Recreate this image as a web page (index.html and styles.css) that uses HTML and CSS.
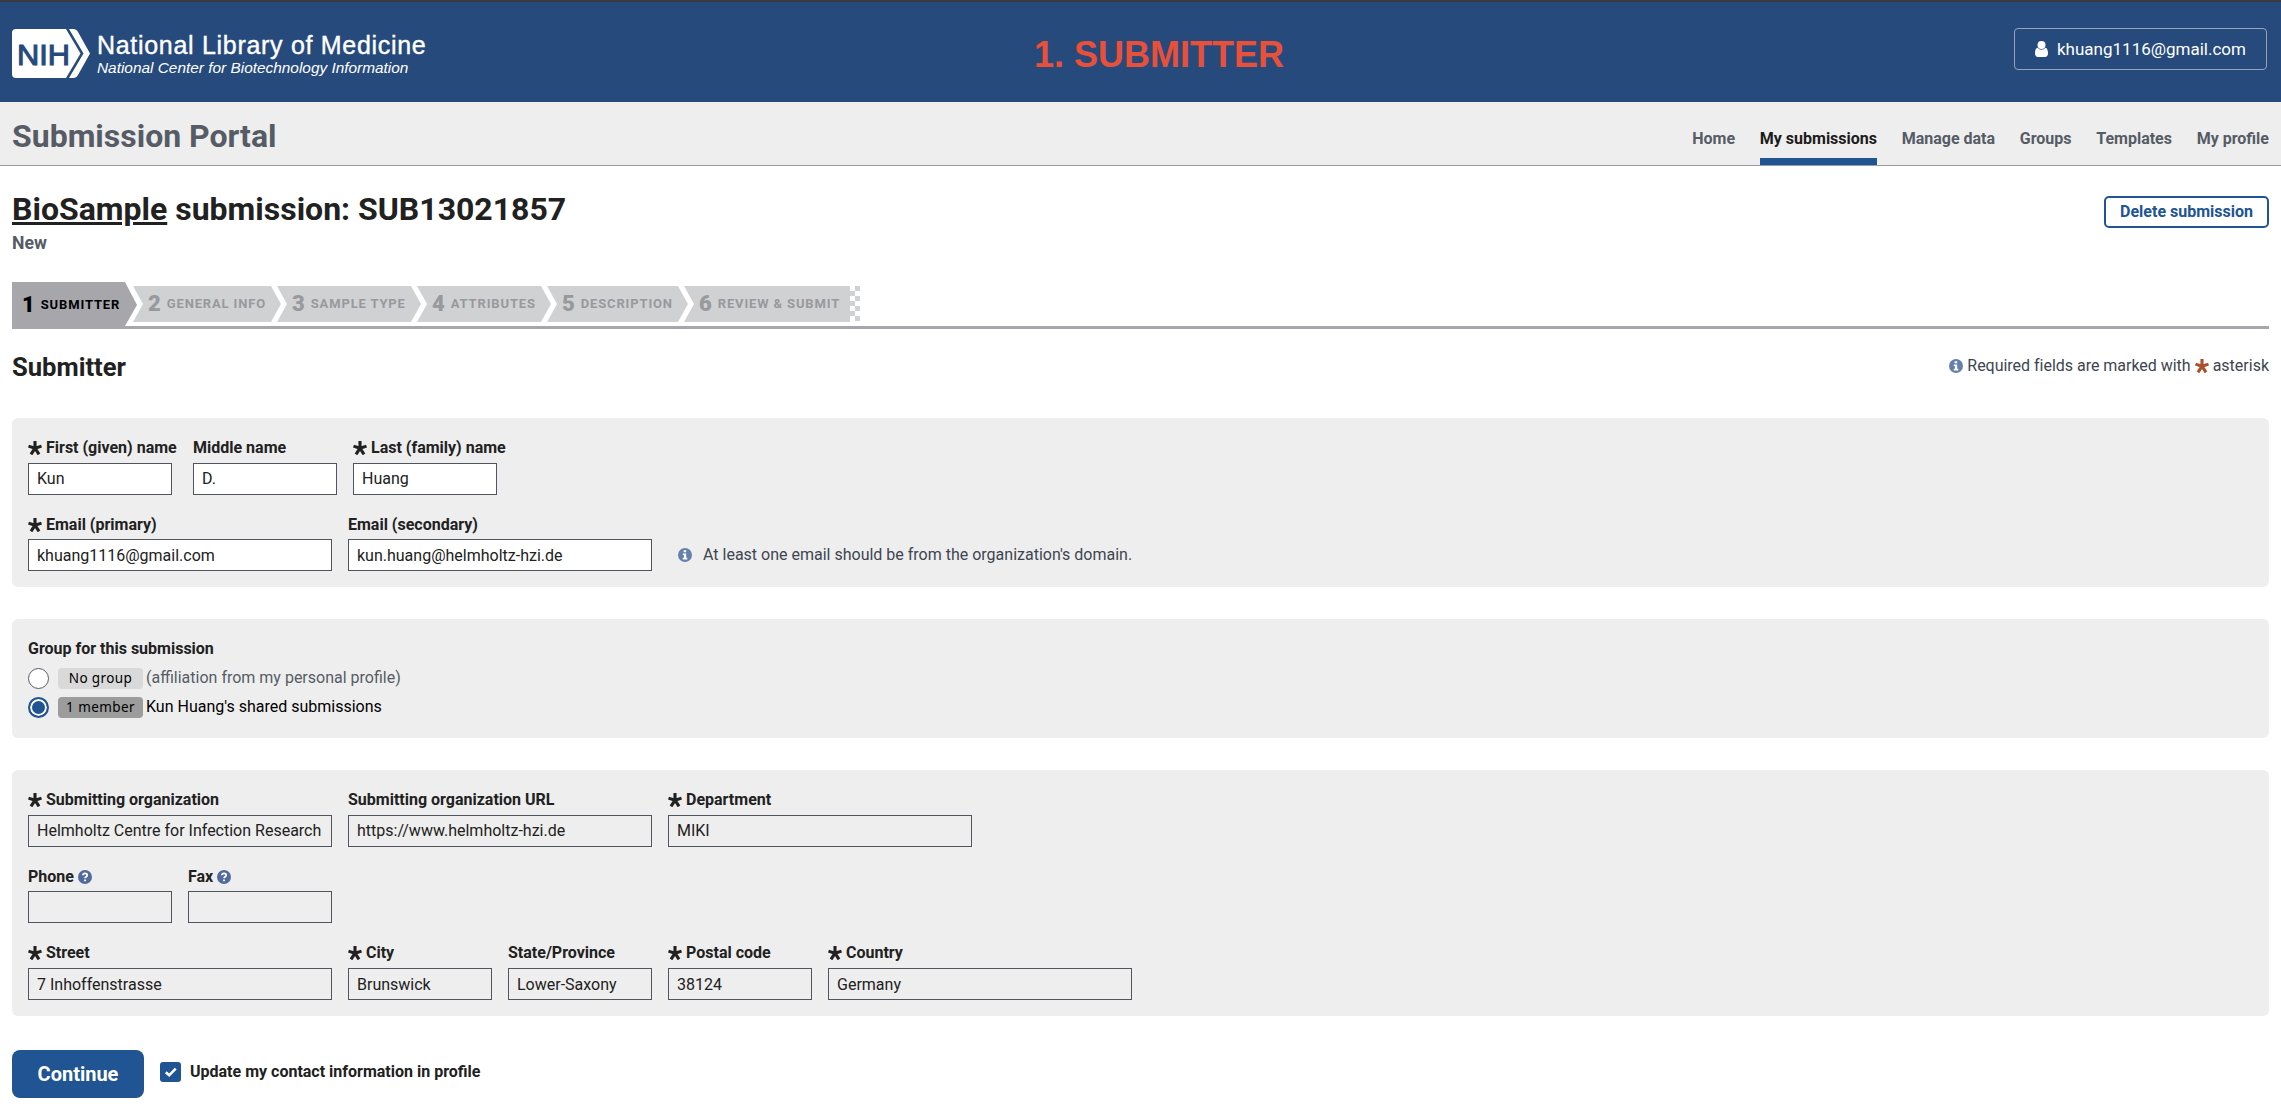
FILE: index.html
```html
<!DOCTYPE html>
<html lang="en">
<head>
<meta charset="utf-8">
<title>BioSample submission: SUB13021857</title>
<link rel="stylesheet" href="styles.css">
</head>
<body>
<svg class="sprite" aria-hidden="true">
  <symbol id="req" viewBox="0 0 14 14"><path d="M7 7.4V0M7 7.200.5 5.100M7 7.200l6.500-2.100M7 7.200l-4 6.200M7 7.200l4 6.200" fill="none" stroke="currentColor" stroke-width="3.100"/></symbol>
  <symbol id="info" viewBox="0 0 14 14"><circle cx="7" cy="7" r="7" fill="currentColor"/><path d="M5.6 2.2h2.6v2H5.6zM4.8 5.4h3.4v4.4h1.1v1.6H4.8V9.8h1.1V7H4.8z" fill="#fff"/></symbol>
  <symbol id="help" viewBox="0 0 14 14"><circle cx="7" cy="7" r="7" fill="currentColor"/><path d="M4.900 5.300C5 3.900 5.900 3.400 7 3.400c1.300 0 2.200.7 2.200 1.800 0 1.600-2.100 1.500-2.100 3.100M7 9.500v1.700" fill="none" stroke="#fff" stroke-width="1.800"/></symbol>
</svg>

<header class="masthead">
  <a class="brand">
    <svg class="logo" width="78" height="49" viewBox="0 0 78 49">
      <path d="M4 0H54L68.500 24.500 54 49H4Q0 49 0 45V4Q0 0 4 0Z" fill="#fff"/>
      <path d="M57 0H61Q64.500 0 66 3L78 24.500 66 46Q64.500 49 61 49H57L71.500 24.500Z" fill="#fff"/>
      <text class="logo-text" x="5" y="35.500" textLength="53" lengthAdjust="spacingAndGlyphs">NIH</text>
    </svg>
    <span class="brand-text">
      <span class="brand-name">National Library of Medicine</span>
      <span class="brand-sub">National Center for Biotechnology Information</span>
    </span>
  </a>
  <div class="stage">1. SUBMITTER</div>
  <a class="account">
    <svg width="13" height="16" viewBox="0 0 13 16"><circle cx="6.500" cy="4" r="4" fill="#fff"/><path d="M2.600 6.700C.8 7.200 0 9 0 12.300 0 14.600 1.200 16 3 16h7c1.800 0 3-1.400 3-3.700 0-3.300-.8-5.100-2.600-5.600a4.800 4.800 0 0 1-7.800 0z" fill="#fff"/></svg>
    <span>khuang1116@gmail.com</span>
  </a>
</header>

<div class="portal">
  <div class="portal-title">Submission Portal</div>
  <nav class="nav">
    <a>Home</a><a class="current">My submissions</a><a>Manage data</a><a>Groups</a><a>Templates</a><a>My profile</a>
  </nav>
</div>

<main class="page">
  <div class="heading">
    <div>
      <h1><a>BioSample</a> submission: SUB13021857</h1>
      <p class="status">New</p>
    </div>
    <button class="delete">Delete submission</button>
  </div>

  <ol class="steps">
    <li class="step active"><b>1</b><span>SUBMITTER</span></li>
    <li class="step s2"><b>2</b><span>GENERAL INFO</span></li>
    <li class="step s3"><b>3</b><span>SAMPLE TYPE</span></li>
    <li class="step s4"><b>4</b><span>ATTRIBUTES</span></li>
    <li class="step s5"><b>5</b><span>DESCRIPTION</span></li>
    <li class="step last"><b>6</b><span>REVIEW &amp; SUBMIT</span></li>
    <li class="checker"></li>
  </ol>

  <div class="section-head">
    <h2>Submitter</h2>
    <p class="required"><svg class="ic"><use href="#info"/></svg><span class="req-a">Required fields are marked with</span><svg class="ic star"><use href="#req"/></svg><span class="req-b">asterisk</span></p>
  </div>

  <section class="panel person">
    <div class="row names">
      <label class="field short"><span class="label"><svg class="ic"><use href="#req"/></svg>First (given) name</span><input value="Kun"></label>
      <label class="field short"><span class="label">Middle name</span><input value="D."></label>
      <label class="field short"><span class="label"><svg class="ic"><use href="#req"/></svg>Last (family) name</span><input value="Huang"></label>
    </div>
    <div class="row second">
      <label class="field"><span class="label"><svg class="ic"><use href="#req"/></svg>Email (primary)</span><input value="khuang1116@gmail.com"></label>
      <label class="field"><span class="label">Email (secondary)</span><input value="kun.huang@helmholtz-hzi.de"></label>
      <p class="note"><svg class="ic"><use href="#info"/></svg><span>At least one email should be from the organization's domain.</span></p>
    </div>
  </section>

  <section class="panel group">
    <div class="group-title">Group for this submission</div>
    <label class="choice"><span class="radio"></span><span class="badge">No group</span><span class="muted">(affiliation from my personal profile)</span></label>
    <label class="choice"><span class="radio on"></span><span class="badge dark">1 member</span><span class="choice-text">Kun Huang's shared submissions</span></label>
  </section>

  <section class="panel org">
    <div class="row first">
      <label class="field"><span class="label"><svg class="ic"><use href="#req"/></svg>Submitting organization</span><input readonly value="Helmholtz Centre for Infection Research"></label>
      <label class="field"><span class="label">Submitting organization URL</span><input readonly value="https://www.helmholtz-hzi.de"></label>
      <label class="field"><span class="label"><svg class="ic"><use href="#req"/></svg>Department</span><input readonly value="MIKI"></label>
    </div>
    <div class="row second">
      <label class="field short"><span class="label">Phone<svg class="ic help"><use href="#help"/></svg></span><input readonly></label>
      <label class="field short"><span class="label">Fax<svg class="ic help"><use href="#help"/></svg></span><input readonly></label>
    </div>
    <div class="row">
      <label class="field"><span class="label"><svg class="ic"><use href="#req"/></svg>Street</span><input readonly value="7 Inhoffenstrasse"></label>
      <label class="field short"><span class="label"><svg class="ic"><use href="#req"/></svg>City</span><input readonly value="Brunswick"></label>
      <label class="field short"><span class="label">State/Province</span><input readonly value="Lower-Saxony"></label>
      <label class="field short"><span class="label"><svg class="ic"><use href="#req"/></svg>Postal code</span><input readonly value="38124"></label>
      <label class="field"><span class="label"><svg class="ic"><use href="#req"/></svg>Country</span><input readonly value="Germany"></label>
    </div>
  </section>

  <div class="actions">
    <button class="continue">Continue</button>
    <label class="update"><svg class="check" width="21" height="20" viewBox="0 0 21 20"><rect width="21" height="20" rx="3" fill="#205493"/><path d="M5.800 10.200 9.200 13.300 15.700 6.700" fill="none" stroke="#fff" stroke-width="2.600"/></svg><span>Update my contact information in profile</span></label>
  </div>
</main>
</body>
</html>
```
FILE: styles.css
```css
* { box-sizing: border-box; }
body { margin: 0; background: #fff; color: #212121; font: 16px/20px Roboto, sans-serif; }
h1, h2, p, ol { margin: 0; padding: 0; }
.sprite { display: none; }
.ic { display: block; width: 14px; height: 14px; flex: none; }

.masthead { display: flex; height: 102px; padding: 26px 14px 0 12px; border-top: 2px solid #3a3a3e; background: #264a7c; color: #fff; }
.brand { display: flex; gap: 7px; width: 430px; padding-top: 1px; }
.logo { flex: none; }
.logo-text { font: 30px "Liberation Sans", Arial, sans-serif; fill: #264a7c; stroke: #264a7c; stroke-width: 1.1px; }
.brand-text { display: flex; flex-direction: column; font-family: "Liberation Sans", Arial, sans-serif; white-space: nowrap; }
.brand-name { font-size: 25px; line-height: 28px; padding-top: 2px; letter-spacing: .7px; -webkit-text-stroke: .4px #fff; }
.brand-sub { font-size: 15.4px; line-height: 18px; font-style: italic; }
.stage { width: 260px; margin-left: 592px; padding-top: 7px; font: bold 36px/40px "Liberation Sans", Arial, sans-serif; color: #e8503a; white-space: nowrap; }
.account { display: flex; gap: 9px; align-items: center; width: 253px; height: 42px; padding-left: 20px; border: 1px solid #93a5be; border-radius: 4px; font-size: 17px; margin-left: auto; }

.portal { display: flex; justify-content: space-between; height: 64px; padding: 0 12px; border-bottom: 1px solid #999ca1; background: #eee; color: #565c65; }
.portal-title { padding-top: 14px; font-size: 32px; line-height: 40px; font-weight: 700; }
.nav { display: flex; gap: 24.7px; font-weight: 700; }
.nav a { height: 63px; padding-top: 27px; white-space: nowrap; }
.nav .current { color: #1b1b1b; border-bottom: 7px solid #205493; }

.page { padding: 0 12px; }
.heading { display: flex; justify-content: space-between; align-items: flex-start; height: 116px; padding-top: 23px; }
h1 { font-size: 32px; line-height: 40px; font-weight: 700; }
h1 a { text-decoration: underline; }
.status { padding-top: 4px; font-size: 17.6px; font-weight: 700; color: #565c65; }
.delete { width: 165px; height: 32px; margin-top: 7px; padding: 0 0 2px; border: 2px solid #205493; border-radius: 5px; background: #fff; color: #205493; font: bold 16px Roboto, sans-serif; }

.steps { display: flex; align-items: flex-start; height: 47px; border-bottom: 3px solid #a6a6ab; list-style: none; }
.step { display: flex; align-items: center; gap: 6px; height: 36px; margin-top: 4px; padding-left: 15px; background: #d0d1d3; color: #98999d; font-weight: 700; clip-path: polygon(0 0, calc(100% - 10px) 0, 100% 50%, calc(100% - 10px) 100%, 0 100%, 10px 50%); white-space: nowrap; margin-right: -4px; }
.step b { font-size: 22px; }
.step span { font-size: 13px; letter-spacing: .85px; }
.step.active { width: 125px; height: 44px; margin: 0 -4px 0 0; padding: 2px 0 0 10px; background: #a6a6ab; color: #000; clip-path: polygon(0 0, 113px 0, 100% 52%, 113px 100%, 0 100%); }
.s2 { width: 148px; }
.s3 { width: 144px; }
.s4 { width: 134px; }
.s5 { width: 141px; }
.step.last { width: 166px; margin-right: 0; clip-path: polygon(0 0, 100% 0, 100% 100%, 0 100%, 10px 50%); }
.checker { width: 10px; height: 35px; margin-top: 4px; background: conic-gradient(#d0d1d3 25%, transparent 0 50%, #d0d1d3 0 75%, transparent 0) 0 0 / 10px 10px; }

.section-head { display: flex; justify-content: space-between; height: 89px; padding-top: 22px; }
h2 { font-size: 25.6px; line-height: 32px; font-weight: 700; }
.required { display: flex; align-items: center; height: 30px; color: #3d4551; }
.required .ic, .note .ic { color: #6480ab; }
.req-a { margin-left: 4px; letter-spacing: -.02px; }
.required .star { margin: 0 4px 0 4px; color: #a9522b; }

.panel { padding: 0 16px; border-radius: 6px; background: #eee; margin-bottom: 32px; }
.row { display: flex; gap: 16px; height: 76px; }
.field { display: flex; flex-direction: column; width: 304px; }
.short { width: 144px; }
.names .short:first-child { width: 149px; }
.label { display: flex; align-items: center; gap: 4px; height: 26px; padding-bottom: 5px; font-weight: 700; white-space: nowrap; }
.second .label { padding-bottom: 3px; }
.label .help { color: #536a9c; }
input { width: 100%; height: 32px; padding: 0 8px; border: 1px solid #50545c; border-radius: 0; background: #fff; color: #212121; font: 16px Roboto, sans-serif; }
.names input { width: 144px; padding-bottom: 2px; }
.first input { padding-bottom: 2px; }
input[readonly] { background: #eee; }
.person { height: 169px; padding-top: 19px; }
.org { height: 246px; padding-top: 19px; margin-bottom: 34px; }
.org .second { height: 77px; }
.note { display: flex; align-items: center; gap: 11px; height: 32px; margin: 26px 0 0 10px; color: #3d4551; white-space: nowrap; }

.group { height: 119px; padding-top: 20px; }
.group-title { height: 29px; font-weight: 700; }
.choice { display: flex; align-items: center; height: 21px; margin-bottom: 8px; color: #000; }
.radio { width: 21px; height: 21px; margin-right: 9px; border: 1px solid #565c65; border-radius: 50%; background: #fff; }
.radio.on { border: 2px solid #205493; background: #205493; box-shadow: inset 0 0 0 2px #fff; }
.badge { width: 85px; height: 21px; margin-right: 3px; border-radius: 4px; background: #d9d9d9; font: 13.5px/20px "Noto Sans", sans-serif; text-align: center; letter-spacing: .4px; }
.badge.dark { background: #9c9c9c; }
.muted, .choice-text { padding-bottom: 2px; }
.muted { color: #565c65; }

.actions { display: flex; gap: 16px; }
.continue { width: 132px; height: 48px; border: 0; border-radius: 8px; background: #205493; color: #fff; font: bold 20px Roboto, sans-serif; }
.update { display: flex; align-items: center; gap: 9px; height: 43px; font-weight: 700; }
```
